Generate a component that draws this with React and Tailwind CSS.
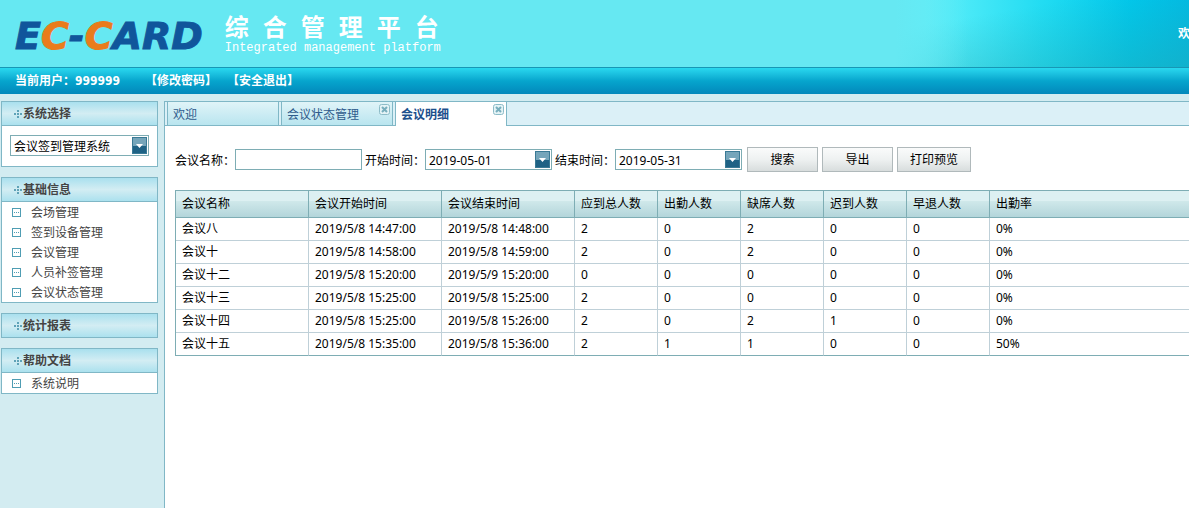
import { useState } from "react";

const menus = [
  {
    title: "基础信息",
    items: ["会场管理", "签到设备管理", "会议管理", "人员补签管理", "会议状态管理"],
  },
  { title: "统计报表", items: [] },
  { title: "帮助文档", items: ["系统说明"] },
];

const tabs = [
  { title: "欢迎", closable: false },
  { title: "会议状态管理", closable: true },
  { title: "会议明细", closable: true },
];

const columns = [
  "会议名称",
  "会议开始时间",
  "会议结束时间",
  "应到总人数",
  "出勤人数",
  "缺席人数",
  "迟到人数",
  "早退人数",
  "出勤率",
];

const rows = [
  ["会议八", "2019/5/8 14:47:00", "2019/5/8 14:48:00", 2, 0, 2, 0, 0, "0%"],
  ["会议十", "2019/5/8 14:58:00", "2019/5/8 14:59:00", 2, 0, 2, 0, 0, "0%"],
  ["会议十二", "2019/5/8 15:20:00", "2019/5/9 15:20:00", 0, 0, 0, 0, 0, "0%"],
  ["会议十三", "2019/5/8 15:25:00", "2019/5/8 15:25:00", 2, 0, 0, 0, 0, "0%"],
  ["会议十四", "2019/5/8 15:25:00", "2019/5/8 15:26:00", 2, 0, 2, 1, 0, "0%"],
  ["会议十五", "2019/5/8 15:35:00", "2019/5/8 15:36:00", 2, 1, 1, 0, 0, "50%"],
];

function DotsIcon() {
  return (
    <svg width="9" height="8" viewBox="0 0 9 8" fill="#5fa3b8" shapeRendering="crispEdges">
      <rect x="3" y="0" width="2" height="2" />
      <rect x="0" y="3" width="2" height="2" />
      <rect x="3" y="3" width="2" height="2" />
      <rect x="6" y="3" width="2" height="2" />
      <rect x="3" y="6" width="2" height="2" />
    </svg>
  );
}

function ItemIcon() {
  return (
    <svg width="9" height="9" viewBox="0 0 9 9" shapeRendering="crispEdges">
      <rect x="0.5" y="0.5" width="8" height="8" fill="#fff" stroke="#4f9db3" />
      <path d="M2 4h1v1H2zM4 4h1v1H4zM6 4h1v1H6z" fill="#4f9db3" />
    </svg>
  );
}

function CloseIcon() {
  return (
    <svg width="11" height="11" viewBox="0 0 11 11">
      <rect x="0.5" y="0.5" width="10" height="10" rx="2" fill="#e4f3f6" stroke="#8dbcc8" />
      <path d="M3 3l5 5M8 3l-5 5" stroke="#78aebd" strokeWidth="2" />
    </svg>
  );
}

function Arrow() {
  return (
    <svg width="7" height="4" viewBox="0 0 7 4" fill="#fff">
      <path d="M0 0h7L3.5 4z" />
    </svg>
  );
}

function PanelTitle({ children }) {
  return (
    <h2 className="flex h-[23px] items-center bg-linear-to-b from-[#a9e0ee] via-[#d3edf3] to-[#abe1ee] pl-3 font-bold text-[#444]">
      <DotsIcon />
      {children}
    </h2>
  );
}

function DateField({ id, label, value, onChange }) {
  return (
    <div className="flex items-center">
      <label htmlFor={id} className="w-[60px] pt-0.5">
        {label}
      </label>
      <div className="flex h-[21px] w-[127px] border border-[#7eadb4] bg-white p-px">
        <input
          id={id}
          value={value}
          onChange={(e) => onChange(e.target.value)}
          className="min-w-0 flex-1 pt-0.5 pl-0.5 outline-none"
        />
        <button
          aria-label={label}
          className="flex w-[15px] items-center justify-center border border-[#3a7a95] bg-linear-to-b from-[#75a5ba] from-50% to-[#1f6285] to-50%"
        >
          <Arrow />
        </button>
      </div>
    </div>
  );
}

function ToolButton({ children }) {
  return (
    <button className="h-[25px] min-w-[71px] border border-[#b0b9bb] bg-linear-to-b from-[#fafbfb] via-[#eef1f1] to-[#d8dddd] px-3">
      {children}
    </button>
  );
}

export default function App() {
  const [name, setName] = useState("");
  const [start, setStart] = useState("2019-05-01");
  const [end, setEnd] = useState("2019-05-31");
  const [active, setActive] = useState(2);

  return (
    <div className="flex min-h-screen flex-col overflow-hidden bg-[#d3ecf1] font-['Noto_Sans','Noto_Sans_CJK_SC',sans-serif] text-[12px] leading-5 text-black">
      {/* Banner */}
      <header className="flex h-[67px] justify-between bg-[#66e8f2]">
        <div className="flex items-center gap-[22px] pl-[15px]">
          <div className="pt-1 font-['DejaVu_Sans',sans-serif] text-[38px] leading-[44px] font-bold text-[#10559b] italic [-webkit-text-stroke:1px]">
            E<span className="text-[#e97c1c]">C</span>-<span className="text-[#e97c1c]">C</span>ARD
          </div>
          <div className="text-white">
            <h1 className="flex gap-3.5 font-['Noto_Sans_CJK_SC',sans-serif] text-[24px] leading-7 font-bold">
              {[..."综合管理平台"].map((c) => (
                <span key={c}>{c}</span>
              ))}
            </h1>
            <p className="font-['Liberation_Mono',monospace] leading-4">
              Integrated management platform
            </p>
          </div>
        </div>
        <div className="flex w-[294px] items-center justify-end bg-[linear-gradient(90deg,#66e8f2_0%,transparent_25%),linear-gradient(170deg,transparent_25%,#25a5b077_100%),linear-gradient(90deg,#60f0fa_10%,#22dcf2_50%,#00c8ec_80%,#00bce6_100%)]">
          <span className="w-[11px] overflow-hidden font-bold whitespace-nowrap text-white">欢</span>
        </div>
      </header>

      {/* User bar */}
      <div className="flex h-[27px] items-center border-t border-[#1797b5] bg-linear-to-b from-[#29d8ef] via-[#06a5cd] to-[#0388bb] pl-[15px] font-['DejaVu_Sans_Condensed','Noto_Sans_CJK_SC',sans-serif] font-bold text-white">
        <span>当前用户：999999</span>
        <a href="#password" className="ml-[25px]">【修改密码】</a>
        <a href="#logout" className="ml-2.5">【安全退出】</a>
      </div>

      <div className="flex flex-1 pt-[7px]">
        {/* Sidebar */}
        <aside className="flex w-[164px] shrink-0 flex-col gap-2.5 pr-[6px] pl-px">
          <section className="border border-[#80b7c6] bg-white">
            <PanelTitle>系统选择</PanelTitle>
            <div className="border-t border-[#80b7c6] px-2 pt-[9px] pb-2.5">
              <div className="relative h-[21px] border border-[#7eadb4] p-px">
                <select
                  aria-label="系统选择"
                  className="block h-[17px] w-full appearance-none pt-0.5 pl-0.5 leading-[15px] outline-none"
                >
                  <option>会议签到管理系统</option>
                </select>
                <span className="pointer-events-none absolute inset-y-px right-px flex w-[15px] items-center justify-center border border-[#3a7a95] bg-linear-to-b from-[#75a5ba] from-50% to-[#1f6285] to-50%">
                  <Arrow />
                </span>
              </div>
            </div>
          </section>

          {menus.map((menu) => (
            <section key={menu.title} className="border border-[#80b7c6] bg-white">
              <PanelTitle>{menu.title}</PanelTitle>
              {menu.items.length > 0 && (
                <ul className="border-t border-[#80b7c6]">
                  {menu.items.map((item) => (
                    <li key={item}>
                      <a href="#" className="flex h-5 items-center gap-2.5 pl-2.5 text-[#444]">
                        <ItemIcon />
                        <span className="pt-0.5">{item}</span>
                      </a>
                    </li>
                  ))}
                </ul>
              )}
            </section>
          ))}
        </aside>

        {/* Content */}
        <main className="min-w-0 flex-1 border-t border-l border-[#80b7c6] bg-white">
          <div className="flex h-6 gap-0.5 border-b border-[#80b7c6] bg-[#dbf0f7] pl-0.5">
            {tabs.map((tab, i) => (
              <div
                key={tab.title}
                className={
                  i === active
                    ? "-mb-px flex w-28 justify-between border-x border-[#80b7c6] bg-white pb-px font-bold text-[#1c4f8c]"
                    : "flex w-28 justify-between border-x border-[#80b7c6] bg-linear-to-b from-[#e0f4f8] to-[#b9e5ef] text-[#2f5b8c]"
                }
              >
                <button onClick={() => setActive(i)} className="flex-1 pt-[3px] pl-[5px] text-left">
                  {tab.title}
                </button>
                {tab.closable && (
                  <button aria-label="关闭" className="mt-0.5 mr-0.5 self-start">
                    <CloseIcon />
                  </button>
                )}
              </div>
            ))}
          </div>

          <div className="pt-[21px] pl-2.5">
            <form className="flex items-center" onSubmit={(e) => e.preventDefault()}>
              <div className="flex items-center gap-[3px]">
                <div className="flex items-center">
                  <label htmlFor="name" className="w-[60px] pt-0.5">会议名称：</label>
                  <input
                    id="name"
                    value={name}
                    onChange={(e) => setName(e.target.value)}
                    className="h-[21px] w-[127px] border border-[#7eadb4] bg-white px-0.5 outline-none"
                  />
                </div>
                <DateField id="start" label="开始时间：" value={start} onChange={setStart} />
                <DateField id="end" label="结束时间：" value={end} onChange={setEnd} />
              </div>
              <div className="ml-[5px] flex gap-1">
                <ToolButton>搜索</ToolButton>
                <ToolButton>导出</ToolButton>
                <ToolButton>打印预览</ToolButton>
              </div>
            </form>

            <table className="mt-[18px] w-full table-fixed border-separate border-spacing-0 border-t border-l border-[#7eadb4]">
              <colgroup>
                {columns.map((c, i) => (
                  <col key={c} className={i < 3 ? "w-[133px]" : i < 8 ? "w-[83px]" : ""} />
                ))}
              </colgroup>
              <thead>
                <tr className="h-[27px]">
                  {columns.map((c) => (
                    <th
                      key={c}
                      className="border-r border-b border-[#7eadb4] bg-linear-to-b from-[#ddf0f2] from-40% via-[#cfe8ea] via-40% to-[#b3d5da] px-1.5 text-left font-normal last:border-r-0"
                    >
                      {c}
                    </th>
                  ))}
                </tr>
              </thead>
              <tbody>
                {rows.map((row) => (
                  <tr key={row[0]} className="group h-[23px]">
                    {row.map((cell, i) => (
                      <td
                        key={i}
                        className="border-r border-b border-[#bfd0d8] px-1.5 last:border-r-0 group-last:border-b-[#7eadb4]"
                      >
                        {cell}
                      </td>
                    ))}
                  </tr>
                ))}
              </tbody>
            </table>
          </div>
        </main>
      </div>
    </div>
  );
}
